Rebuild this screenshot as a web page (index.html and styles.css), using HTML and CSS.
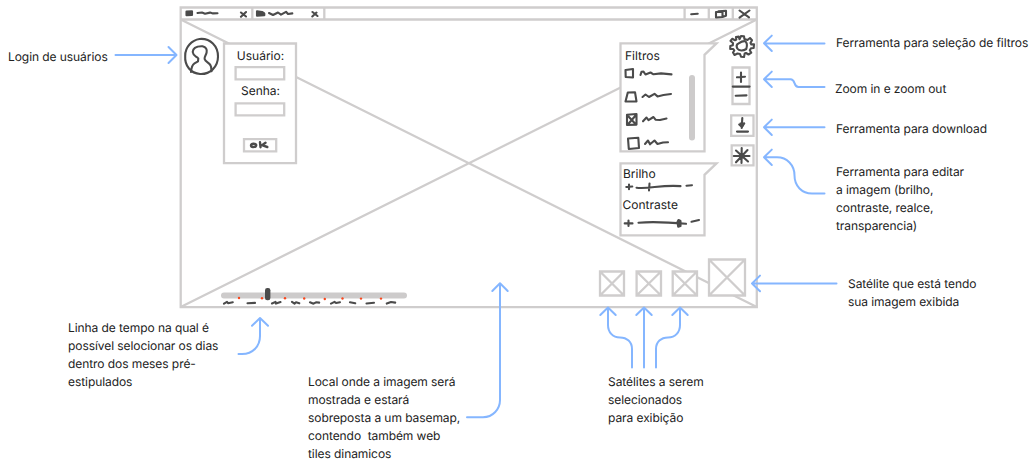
FILE: index.html
```
<!DOCTYPE html>
<html lang="pt-BR">
<head>
<meta charset="utf-8">
<title>Wireframe</title>
<link rel="stylesheet" href="styles.css">
</head>
<body>
<main class="canvas">
<svg class="drawing" viewBox="0 0 1029 462" width="1029" height="462" aria-hidden="true">
  <!-- browser window -->
  <g class="frame">
    <path d="M180.7 7.5H756.8V307.2H180.7ZM180.7 19.5H756.8M252.3 7.5V19.5M324.3 7.5V19.5M684.6 7.5V19.5M708.8 7.5V19.5M732.8 7.5V19.5"/>
    <path d="M180.7 19.5L756.8 307M756.8 19.5L180.7 307"/>
    <!-- panels -->
    <path class="paper" d="M224 43.5H296V163.2H224Z"/>
    <path d="M235.6 67.2H284.2V79.4H235.6ZM235.6 103.3H284.2V115.4H235.6ZM244 139.2H276.2V151.4H244Z"/>
    <path class="paper" d="M620.5 43.4H716.5L704.5 54.8V151.4H620.5Z"/>
    <path class="paper" d="M620.5 163.4H716.5L704.5 174.8V235.4H620.5Z"/>
    <path d="M732.5 67.5H749.5V104H732.5ZM731.2 115.3H753.5V135.8H731.2ZM731.7 145.3H753.5V165.3H731.7Z"/>
    <!-- satellite thumbnails -->
    <path class="paper" d="M600 271.5H624V295.5H600ZL624 295.5M624 271.5L600 295.5"/>
    <path class="paper" d="M636.6 271.5H661V295.5H636.6ZL661 295.5M661 271.5L636.6 295.5"/>
    <path class="paper" d="M672.7 271.5H697V295.5H672.7ZL697 295.5M697 271.5L672.7 295.5"/>
    <path class="paper" d="M709 259.5H745V295.5H709ZL745 295.5M745 259.5L709 295.5"/>
  </g>
  <path class="bar" d="M692 78V137.5M224 295.4H404"/>

  <!-- tabs and window buttons -->
  <g class="ink">
    <path class="solid" d="M186.5 11.5L192 11.3V15L186.5 15.2ZM257 11.3L262 12L264.3 13.5V15.3L257 15.6Z"/>
    <path d="M197.5 13L202 12.5L205 13.7L210 12.6L213 13.4L217.5 13.2M241 12.5L246 16.5M246 12L241 16.8M269 13L273 15L278 12.5L281 14.7L286 11.8L288 14L292.3 13.4M312.5 12L317.5 16M316.5 12.6L312.3 16.5M691.2 14.2L697.7 13.7"/>
    <path d="M716 12L722.5 11.6V17L716 17.5ZM718.5 11.2L726 10.7V15.7L722.5 17M739.5 10.5L749 17.3M749.5 10.5L739.5 17.7"/>
  </g>

  <!-- user avatar -->
  <g class="ink">
    <path d="M199.5 39C192 40 185 47 185.2 56C184.5 66 191 73.4 200 74C210 74.5 218 67 218 56.5C218 46 210.5 38 199.5 39Z"/>
    <path d="M191 72C191.3 68 191.8 65 194.5 63.3L198 61.3L198.3 58.5C196.5 56 193.2 56.5 192.7 52C193 47.3 197.5 46 202.5 46.2C206 47 207.3 49.5 206.6 52.5C206 55.5 204.3 56.3 204.6 59C205.5 62 209.3 62.5 210.6 65.5C211.6 67.5 211.2 69.5 211.5 71.3"/>
  </g>

  <!-- settings gear -->
  <g class="ink">
    <path d="M739.5 39.3L741 36L744 36.2L744.4 39L747.5 40L750 38L752 40.2L750.5 43L751.3 44.4L754 44.2L753.7 48L751 48.2L749.8 50.3L751.3 52.7L748.5 54.5L746 53L744.7 53.5L744 57L741 56.7L740 54L737.5 53.5L734.5 55L733 52.5L734.3 50.5L733.3 49L730.2 49L730.3 46L732.8 45.3L733 43L730.5 41L732.2 38.8L735 40.3L736.3 39.6L736 37L738.7 36.6Z"/>
    <path d="M737.5 44C740 42.5 742 40.8 745 41.2C747 42.5 747.2 46 746.3 49C743 51 739 51 737.3 48.5C736.3 46.5 736.5 45 737.5 44Z"/>
  </g>

  <!-- zoom, download and edit tools -->
  <g class="ink">
    <path d="M741 72.5V82M737 77.3L745 76.7M732.8 86.6H749.6M735.7 95.8L746.5 95.4M737 131.6H748M742.3 118L741.7 128M739.2 124.5L742 127L744.3 123.3"/>
    <path class="solid" d="M740.5 123.5H743.3L742 126.7Z"/>
    <path d="M741.7 148L741.5 163M733.8 156H749.5M736 150.5L748 161.5M747.5 150L736 162.3"/>
    <circle class="solid" cx="741.6" cy="156" r="1.7"/>
  </g>

  <!-- filter list -->
  <g class="ink">
    <path d="M625.5 70L633 69V77.5L625.7 77ZM627.8 92.5L635 92.2L636.5 101.5L625.5 101.5ZM627 114.7L636.5 114V124.6L627 125ZM628 116L635.5 124M636 115L628.3 124M628 138.5L638.3 137.8L639 148L628.8 149Z"/>
    <path d="M640.5 75L641.5 71.7L643.5 71.6L645.5 74.5L650.5 72.5L653.5 74.3L661 73.4L671.5 74.4M642.5 97L645.5 94.5L649 97L654.5 93.8L657.5 96.4L663.5 95L671 94M643 121.3L646.5 117.5L648.5 120.2L653.5 117L655.5 119.7L660 120L666.5 118.5M645 144L648 140.5L650 144.3L654.5 140.5L657.5 144L663 142.5L668 142.3"/>
  </g>

  <!-- brightness and contrast sliders -->
  <g class="ink">
    <path d="M629 184.5V189.3M626.3 187L632.3 186.5M636.5 187.7C649 189.3 661 184.5 680.5 186.1M649.5 183.5L649 190.5M686.5 185.7L692 185.2M628.5 220.5V226M624.7 223.4H632.5M638.5 222.7C655 221.2 668 222.2 686 223.8M691.5 221.7L699 220"/>
    <path class="solid" d="M678.5 220L680.5 221V226L678.2 226.7L677.5 222Z"/>
  </g>
  <path class="ink heavy" d="M253.5 143.7C250 143.6 250.5 147 253 147C257 147 257.3 143.5 253.5 143.7ZM260 142.3L260.5 147.2M265.5 142.7L262 145.2L267.3 147"/>

  <!-- timeline -->
  <g class="ticks">
    <circle cx="239" cy="298" r="1.2"/><circle cx="262" cy="298.2" r="1.2"/><circle cx="285" cy="298.2" r="1.2"/><circle cx="304.2" cy="298.5" r="1.2"/><circle cx="324.8" cy="299" r="1.2"/><circle cx="342.5" cy="298.5" r="1.2"/><circle cx="361" cy="298.6" r="1.2"/><circle cx="381" cy="298.6" r="1.2"/>
  </g>
  <rect class="thumb" x="265" y="288" width="5.4" height="12.2" rx="2.3"/>
  <path class="ink" d="M224 303.7L227 301.9L228 303.2L232.8 302.2M247.5 303.3L255 302.9M272 303.5L275.5 301.9L276 303.6L280.5 302.1M292 301.9L294.5 303.6L296 302.3L299.3 303.3M310 302.3L313.5 303.7L316 302.3L319.2 302.6M331 303.6L334.5 301.9L336 303L340 302.2M350 302.3L355.2 303.2M366.5 303.5L374 302.8M386.8 303.6L391 302L395.2 302.6"/>

  <!-- annotation arrows -->
  <g class="arrows">
    <path d="M115.5 55H176M168.5 47L176.5 55L168.5 63"/>
    <path d="M824.5 43.6L764.5 43.2M771.8 35.6L764 43.3L771.8 51"/>
    <path d="M824.5 87H798.5C793 87 796 79.3 790.5 79.3H764.5M771.8 71.6L764 79.3L771.8 87"/>
    <path d="M824.5 127.3H764.5M771.8 119.6L764 127.3L771.8 135"/>
    <path d="M824.5 193.5H812C802 193.5 794.5 186 794.5 175.5C794.5 165 787 157.3 777 157.3H764.5M771.8 149.6L764 157.3L771.8 165"/>
    <path d="M836.5 283.5H752M760 275.6L752 283.5L760 291.2"/>
    <path d="M238.5 354H242C253 354 260 346 260 336V318M252 325.8L260 318L268 325.8"/>
    <path d="M467 417.2H483C493 417.2 500 409 500 400V284M492.3 291L500 283.3L507.7 291"/>
    <path d="M632 367.5V349C632 342 627 337.4 620 337.4C612.5 337.4 608 332 608 325V308M600.3 315L608 307.5L615.7 315"/>
    <path d="M644 367.5V308M636.3 315L644 307.5L651.7 315"/>
    <path d="M656 367.5V349C656 342 661 337.4 668 337.4C675.5 337.4 680 332 680 325V308M672.3 315L680 307.5L687.7 315"/>
  </g>
</svg>

<!-- labels inside the window -->
<p class="label field user">Usuário:</p>
<p class="label field password">Senha:</p>
<p class="label filters">Filtros</p>
<p class="label brightness">Brilho</p>
<p class="label contrast">Contraste</p>

<!-- annotations -->
<p class="note login">Login de usuários</p>
<p class="note gear">Ferramenta para seleção de filtros</p>
<p class="note zoom">Zoom in e zoom out</p>
<p class="note download">Ferramenta para download</p>
<p class="note edit">Ferramenta para editar<br>a imagem (brilho,<br>contraste, realce,<br>transparencia)</p>
<p class="note current">Satélite que está tendo<br>sua imagem exibida</p>
<p class="note satellites">Satélites a serem<br>selecionados<br>para exibição</p>
<p class="note place">Local onde a imagem será<br>mostrada e estará<br>sobreposta a um basemap,<br>contendo&nbsp; também web<br>tiles dinamicos</p>
<p class="note timeline">Linha de tempo na qual é<br>possível selocionar os dias<br>dentro dos meses pré-<br>estipulados</p>
</main>
</body>
</html>
```
FILE: styles.css
```
body { margin: 0; background: #fff; }
.canvas {
  position: relative;
  width: 1029px;
  height: 462px;
  overflow: hidden;
  font: 12px/18px Inter, "Liberation Sans", sans-serif;
  text-rendering: geometricPrecision;
  color: #222;
}
.drawing { display: block; fill: none; stroke-linecap: round; stroke-linejoin: round; }
.frame { stroke: #cfcdcd; stroke-width: 2.3; stroke-linecap: butt; stroke-linejoin: miter; }
.paper { fill: #fff; }
.bar { stroke: #cdcbcb; stroke-width: 6; }
.ink { stroke: #4b4b4b; stroke-width: 2.1; }
.solid { fill: #4b4b4b; }
.heavy { stroke-width: 2.4; }
.thumb { fill: #4b4b4b; }
.ticks { fill: #f9461c; }
.arrows { stroke: #85b6ff; stroke-width: 2; }

/* labels pinned to the canvas */
.note, .label { position: absolute; margin: 0; white-space: nowrap; }
.note { letter-spacing: -0.07px; }
.field { left: 224px; width: 73px; text-align: center; }
.user { top: 47px; }
.password { top: 82px; }
.filters { left: 625px; top: 47px; }
.brightness { left: 623px; top: 165px; }
.contrast { left: 622.5px; top: 196px; }
.login { left: 8px; top: 48px; }
.gear { left: 836px; top: 34px; }
.zoom { left: 835px; top: 80px; }
.download { left: 836px; top: 120px; }
.edit { left: 836px; top: 163px; }
.current { left: 848px; top: 275px; }
.satellites { left: 608px; top: 373px; }
.place { left: 308px; top: 373px; }
.timeline { left: 68px; top: 319px; }
```
